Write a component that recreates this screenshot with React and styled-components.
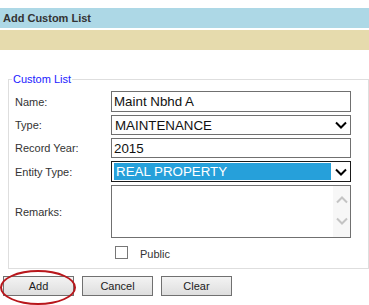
import React from "react";
import styled, { createGlobalStyle } from "styled-components";

const GlobalStyle = createGlobalStyle`
  html, body { margin: 0; padding: 0; background: #fff; }
  body { font-family: "Liberation Sans", Arial, sans-serif; }
  * { box-sizing: border-box; }
`;

const Page = styled.div`
  width: 369px;
  height: 305px;
  padding-top: 8px;
  overflow: hidden;
`;

const Header = styled.div`
  height: 20px;
  line-height: 20px;
  background: #add8e6;
  color: #333;
  font-weight: bold;
  font-size: 11px;
  padding-left: 3px;
`;

const Band = styled.div`
  margin-top: 2px;
  height: 20px;
  background: #e6dbad;
`;

const Fieldset = styled.fieldset`
  margin: 22px 0 0 8px;
  border: 1px solid #dedede;
  border-right-color: #dedede;
  padding: 5px 0 9px 4px;
  min-width: 0;
`;

const Legend = styled.legend`
  font-size: 11px;
  line-height: 14px;
  color: #1a1aff;
  padding: 0 1px;
  margin-left: -1px;
`;

const FormGrid = styled.div`
  display: grid;
  grid-template-columns: 98px 240px;
  row-gap: 3px;
  align-items: center;
`;

const Label = styled.div`
  font-size: 11px;
  color: #333;
  padding-left: 2px;
`;

const TextBox = styled.div`
  height: ${(p) => p.$h}px;
  border: 1px solid ${(p) => (p.$focused ? "#1a1a1a" : "#707070")};
  font-size: 13.33px;
  color: #111;
  display: flex;
  align-items: center;
  padding: 0 2px;
  white-space: nowrap;
`;

const SelectText = styled.div`
  flex: 1;
  height: 100%;
  display: flex;
  align-items: center;
  padding-left: ${(p) => (p.$selected ? "2px" : "1px")};
  background: ${(p) => (p.$selected ? "#26a0da" : "transparent")};
  color: ${(p) => (p.$selected ? "#fff" : "#111")};
  margin: ${(p) => (p.$selected ? "1px 0" : "0")};
  height: ${(p) => (p.$selected ? "calc(100% - 2px)" : "100%")};
`;

const Chevron = styled.svg`
  width: 12px;
  height: 8px;
  margin: 0 1px 0 4px;
  flex: none;
`;

const TextArea = styled.div`
  height: 53px;
  border: 1px solid #707070;
  display: flex;
  justify-content: flex-end;
`;

const ScrollTrack = styled.div`
  width: 17px;
  background: #f7f7f7;
  display: flex;
  flex-direction: column;
  align-items: center;
  padding-top: 10px;
  gap: 13px;
`;

const CheckRow = styled.div`
  grid-column: 2;
  display: flex;
  align-items: center;
  height: 14px;
  margin-top: 4px;
  padding-left: 4px;
`;

const CheckBox = styled.div`
  width: 13px;
  height: 13px;
  border: 1px solid #777;
  background: #fff;
`;

const CheckLabel = styled.span`
  font-size: 11px;
  color: #333;
  margin-left: 12px;
  padding-top: 3px;
`;

const ButtonRow = styled.div`
  display: flex;
  gap: 8px;
  margin-top: 7px;
  padding-left: 3px;
`;

const ButtonWrap = styled.div`
  position: relative;
`;

const Button = styled.button`
  width: 71px;
  height: 20px;
  border: 1px solid #707070;
  background: linear-gradient(#f3f3f3, #dedede);
  font-family: "Liberation Sans", Arial, sans-serif;
  font-size: 11px;
  color: #1c1c1c;
  padding: 0;
  border-radius: 0;
`;

const Circle = styled.div`
  position: absolute;
  left: -3px;
  top: -6px;
  width: 76px;
  height: 35px;
  border: 2px solid #b8161b;
  border-radius: 50%;
  pointer-events: none;
`;

const Down = ({ color = "#000" }) => (
  <Chevron viewBox="0 0 12 8">
    <polyline points="1,1.5 6,6.5 11,1.5" fill="none" stroke={color} strokeWidth="2" />
  </Chevron>
);

const ScrollArrow = ({ up }) => (
  <svg width="12" height="8" viewBox="0 0 12 8">
    <polyline
      points={up ? "1,6.5 6,1.5 11,6.5" : "1,1.5 6,6.5 11,1.5"}
      fill="none"
      stroke="#c4c4c4"
      strokeWidth="2"
    />
  </svg>
);

export default function App() {
  return (
    <>
      <GlobalStyle />
      <Page>
        <Header>Add Custom List</Header>
        <Band />
        <Fieldset>
          <Legend>Custom List</Legend>
          <FormGrid>
            <Label>Name:</Label>
            <TextBox $h={21}>Maint Nbhd A</TextBox>
            <Label>Type:</Label>
            <TextBox $h={20}>
              <SelectText>MAINTENANCE</SelectText>
              <Down />
            </TextBox>
            <Label>Record Year:</Label>
            <TextBox $h={20}>2015</TextBox>
            <Label>Entity Type:</Label>
            <TextBox $h={21} $focused>
              <SelectText $selected>REAL PROPERTY</SelectText>
              <Down />
            </TextBox>
            <Label>Remarks:</Label>
            <TextArea>
              <ScrollTrack>
                <ScrollArrow up />
                <ScrollArrow />
              </ScrollTrack>
            </TextArea>
            <CheckRow>
              <CheckBox />
              <CheckLabel>Public</CheckLabel>
            </CheckRow>
          </FormGrid>
        </Fieldset>
        <ButtonRow>
          <ButtonWrap>
            <Button>Add</Button>
            <Circle />
          </ButtonWrap>
          <Button>Cancel</Button>
          <Button>Clear</Button>
        </ButtonRow>
      </Page>
    </>
  );
}
